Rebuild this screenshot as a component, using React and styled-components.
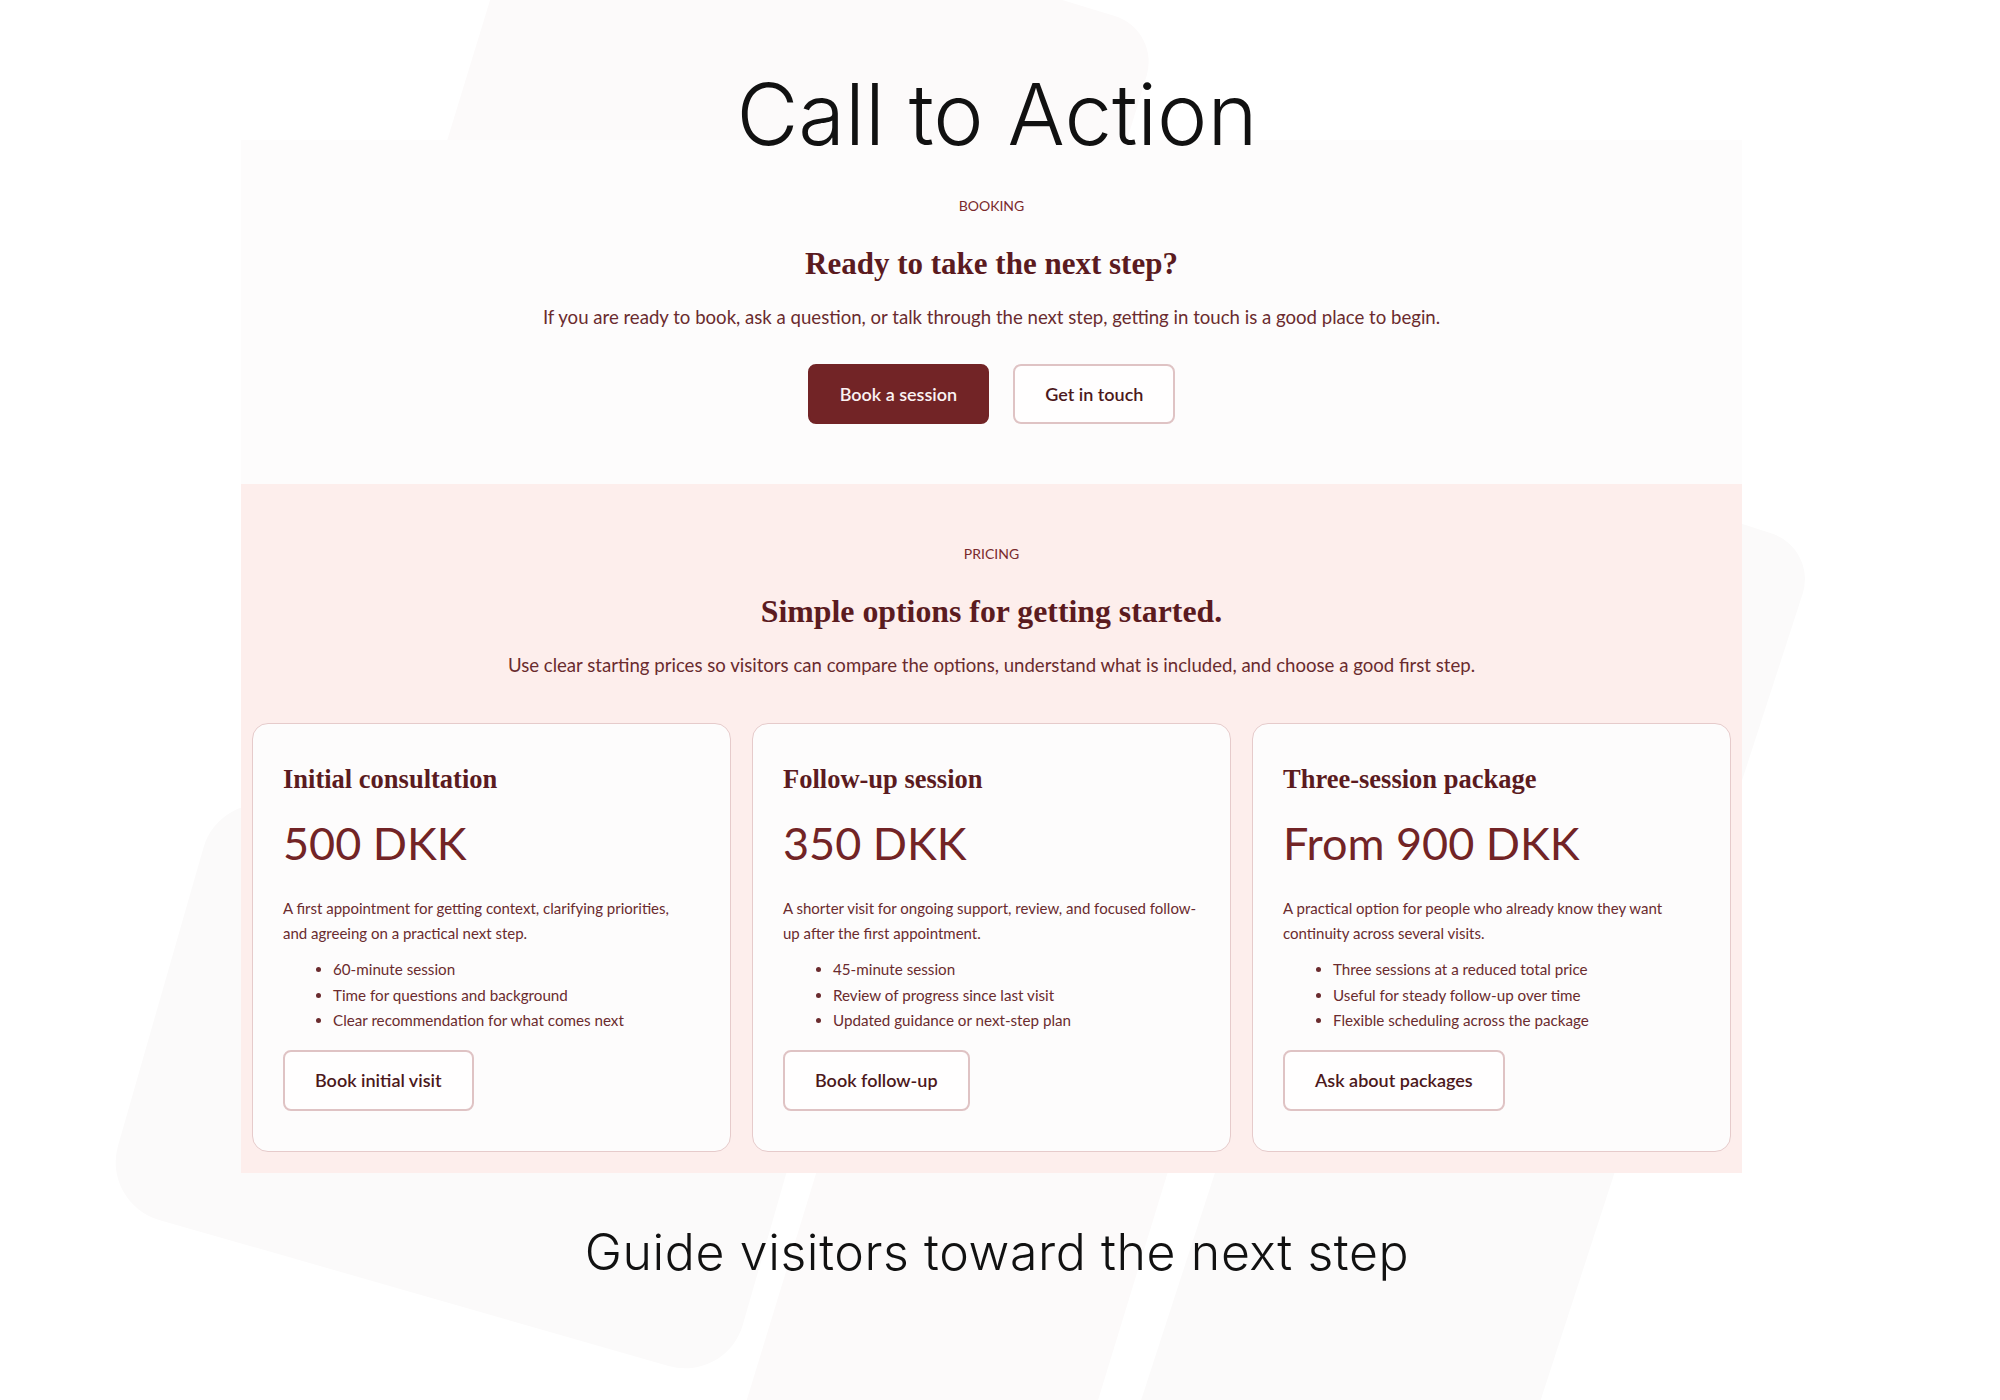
import React from "react";
import styled, { createGlobalStyle } from "styled-components";

const GlobalStyle = createGlobalStyle`
  html, body { margin: 0; padding: 0; background: #ffffff; }
  body { font-family: "Lato", "Liberation Sans", sans-serif; -webkit-font-smoothing: antialiased; }
  * { box-sizing: border-box; }
`;

const Page = styled.div`
  position: relative;
  width: 2000px;
  min-height: 1400px;
  overflow: hidden;
  background: #ffffff;
`;

const Decor = styled.div`
  position: absolute;
  left: ${(p) => p.$x}px;
  top: ${(p) => p.$y}px;
  width: ${(p) => p.$w}px;
  height: ${(p) => p.$h}px;
  border-radius: ${(p) => p.$r || 48}px;
  background: ${(p) => p.$bg || "#fbf9f9"};
  transform: rotate(${(p) => p.$rot}deg);
  transform-origin: 0 0;
  z-index: 0;
`;

const Content = styled.div`
  position: relative;
  z-index: 1;
  width: 1994px;
  display: flex;
  flex-direction: column;
`;

const DisplayTitle = styled.h1`
  position: relative;
  z-index: 2;
  margin: 0 0 -26px;
  padding-top: 63px;
  text-align: center;
  font-family: "Inter", "Liberation Sans", sans-serif;
  font-weight: 300;
  font-size: 85px;
  line-height: 103px;
  color: #111111;
`;

const FooterTitle = styled.h2`
  margin: 51px 0 0;
  text-align: center;
  font-family: "Inter", "Liberation Sans", sans-serif;
  font-weight: 300;
  font-size: 50px;
  letter-spacing: 0.6px;
  line-height: 57px;
  color: #111111;
`;

const Sections = styled.div`
  margin-left: 241px;
  width: 1501px;
  display: flex;
  flex-direction: column;
`;

const Section = styled.section`
  background: ${(p) => p.$bg};
  padding: ${(p) => p.$pad};
  display: flex;
  flex-direction: column;
  align-items: center;
  text-align: center;
`;

const Eyebrow = styled.div`
  font-size: 14px;
  line-height: 1.5;
  text-transform: uppercase;
  color: #7a2a2d;
`;

const Heading = styled.h2`
  margin: 29px 0 0;
  font-family: "Liberation Serif", "Times New Roman", serif;
  font-weight: 700;
  font-size: ${(p) => p.$size || 31}px;
  line-height: 37px;
  color: #5b1b1f;
`;

const Lead = styled.p`
  margin: 22px 0 0;
  font-size: 18.6px;
  line-height: 26.6px;
  color: #6a2b2e;
`;

const Actions = styled.div`
  margin-top: 33px;
  display: flex;
  gap: 24px;
`;

const Button = styled.a`
  display: inline-flex;
  align-items: center;
  justify-content: center;
  padding: 16px 30px;
  border: 2px solid ${(p) => (p.$primary ? "#722426" : "#dfc3c4")};
  border-radius: 8px;
  background: ${(p) => (p.$primary ? "#722426" : "#fffefe")};
  color: ${(p) => (p.$primary ? "#fbf2f2" : "#4c181b")};
  font-family: "Lato", "Liberation Sans", sans-serif;
  font-weight: 600;
  font-size: 18px;
  line-height: ${(p) => p.$lh || 24}px;
  text-decoration: none;
  cursor: pointer;
`;

const CardGrid = styled.div`
  align-self: stretch;
  margin-top: 45px;
  display: grid;
  grid-template-columns: repeat(3, 1fr);
  gap: 21px;
  text-align: left;
`;

const Card = styled.article`
  display: flex;
  flex-direction: column;
  align-items: flex-start;
  padding: 39px 30px 40px;
  background: #fdfcfc;
  border: 1px solid #e6cbcb;
  border-radius: 16px;
`;

const CardTitle = styled.h3`
  margin: 0;
  font-family: "Liberation Serif", "Times New Roman", serif;
  font-weight: 700;
  font-size: 26.5px;
  line-height: 32px;
  color: #5b1b1f;
`;

const Price = styled.div`
  margin-top: 23px;
  font-size: 45px;
  line-height: 50.6px;
  color: #722426;
`;

const Desc = styled.p`
  margin: 27.5px 0 0;
  max-width: ${(p) => (p.$measure ? `${p.$measure}px` : "none")};
  font-size: 15px;
  line-height: 25px;
  color: #6a2b2e;
`;

const Features = styled.ul`
  margin: 11px 0 0;
  padding-left: 50px;
  font-size: 15.2px;
  line-height: 25.5px;
  color: #6a2b2e;
`;

const CardAction = styled.div`
  margin-top: 16.5px;
`;

const plans = [
  {
    title: "Initial consultation",
    price: "500 DKK",
    desc: "A first appointment for getting context, clarifying priorities, and agreeing on a practical next step.",
    measure: 405,
    items: ["60-minute session", "Time for questions and background", "Clear recommendation for what comes next"],
    cta: "Book initial visit",
  },
  {
    title: "Follow-up session",
    price: "350 DKK",
    desc: "A shorter visit for ongoing support, review, and focused follow-up after the first appointment.",
    items: ["45-minute session", "Review of progress since last visit", "Updated guidance or next-step plan"],
    cta: "Book follow-up",
  },
  {
    title: "Three-session package",
    price: "From 900 DKK",
    desc: "A practical option for people who already know they want continuity across several visits.",
    items: ["Three sessions at a reduced total price", "Useful for steady follow-up over time", "Flexible scheduling across the package"],
    cta: "Ask about packages",
  },
];

export default function App() {
  return (
    <>
      <GlobalStyle />
      <Page>
        <Decor $x={539} $y={-160} $w={650} $h={820} $rot={17} $bg="#fcfafa" />
        <Decor $x={1456} $y={431} $w={380} $h={1200} $rot={18} $bg="#fbfafa" />
        <Decor $x={962} $y={696} $w={336} $h={900} $rot={17} $bg="#fcfafa" />
        <Decor $x={220} $y={790} $w={650} $h={430} $rot={16} $r={60} $bg="#fbfafa" />
        <Content>
          <DisplayTitle>Call to Action</DisplayTitle>
          <Sections>
            <Section $bg="#fdfcfc" $pad="55px 0 60px">
              <Eyebrow>Booking</Eyebrow>
              <Heading>Ready to take the next step?</Heading>
              <Lead>
                If you are ready to book, ask a question, or talk through the next step, getting in touch is a good place to begin.
              </Lead>
              <Actions>
                <Button $primary>Book a session</Button>
                <Button>Get in touch</Button>
              </Actions>
            </Section>
            <Section $bg="#fdeeec" $pad="59px 11px 21px">
              <Eyebrow>Pricing</Eyebrow>
              <Heading $size={31.8}>Simple options for getting started.</Heading>
              <Lead>
                Use clear starting prices so visitors can compare the options, understand what is included, and choose a good first step.
              </Lead>
              <CardGrid>
                {plans.map((p) => (
                  <Card key={p.title}>
                    <CardTitle>{p.title}</CardTitle>
                    <Price>{p.price}</Price>
                    <Desc $measure={p.measure}>{p.desc}</Desc>
                    <Features>
                      {p.items.map((it) => (
                        <li key={it}>{it}</li>
                      ))}
                    </Features>
                    <CardAction>
                      <Button $lh={25}>{p.cta}</Button>
                    </CardAction>
                  </Card>
                ))}
              </CardGrid>
            </Section>
          </Sections>
          <FooterTitle>Guide visitors toward the next step</FooterTitle>
        </Content>
      </Page>
    </>
  );
}
